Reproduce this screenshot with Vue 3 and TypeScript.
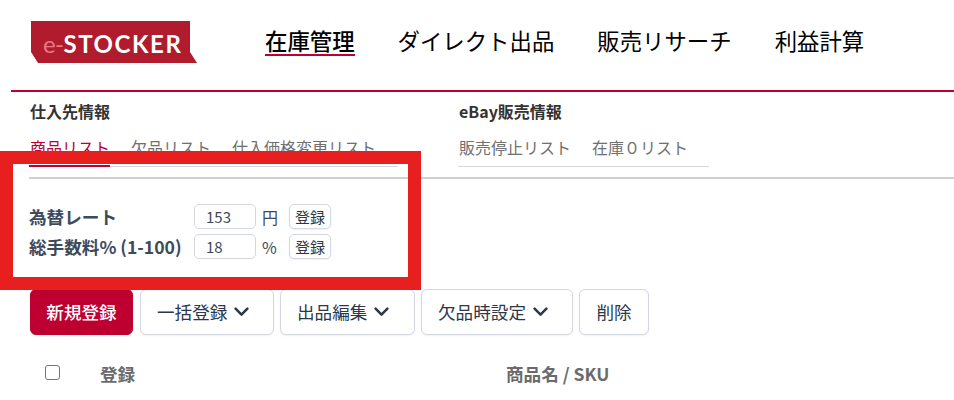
<script setup lang="ts">
const navItems = ["在庫管理", "ダイレクト出品", "販売リサーチ", "利益計算"];
const supplierTabs = ["商品リスト", "欠品リスト", "仕入価格変更リスト"];
const ebayTabs = ["販売停止リスト", "在庫０リスト"];
const actions = [
  { label: "一括登録", wide: 134 },
  { label: "出品編集", wide: 135 },
  { label: "欠品時設定", wide: 152 },
];
</script>

<template>
  <div class="page">
    <header class="header">
      <div class="logo"><span class="logo-e">e-</span>STOCKER</div>
      <nav class="nav">
        <a v-for="(item, i) in navItems" :key="item" class="nav-item" :class="{ active: i === 0 }">{{ item }}</a>
      </nav>
    </header>

    <section class="subnav">
      <div class="group supplier">
        <h2>仕入先情報</h2>
        <div class="tabs">
          <a v-for="(tab, i) in supplierTabs" :key="tab" class="tab" :class="{ active: i === 0 }">{{ tab }}</a>
        </div>
      </div>
      <div class="group ebay">
        <h2>eBay販売情報</h2>
        <div class="tabs">
          <a v-for="tab in ebayTabs" :key="tab" class="tab">{{ tab }}</a>
        </div>
      </div>
    </section>

    <section class="settings">
      <div class="row">
        <label>為替レート</label>
        <input class="field" value="153" />
        <span class="unit">円</span>
        <button class="small">登録</button>
      </div>
      <div class="row">
        <label>総手数料% (1-100)</label>
        <input class="field" value="18" />
        <span class="unit">%</span>
        <button class="small">登録</button>
      </div>
    </section>

    <section class="actions">
      <button class="btn primary">新規登録</button>
      <button v-for="a in actions" :key="a.label" class="btn menu" :style="{ width: a.wide + 'px' }">
        {{ a.label }}
        <svg class="chev" viewBox="0 0 15 10" width="15" height="10">
          <path d="M1.6 1.6 7.5 7.6l5.9-6" fill="none" stroke="#2d3748" stroke-width="2.5" stroke-linecap="round" stroke-linejoin="round" />
        </svg>
      </button>
      <button class="btn del">削除</button>
    </section>

    <section class="thead">
      <span class="check"></span>
      <span class="col-reg">登録</span>
      <span class="col-name">商品名 / SKU</span>
    </section>

    <div class="highlight"></div>
  </div>
</template>

<style>
html,
body {
  background: #fff;
  overflow: hidden;
}
</style>

<style scoped>
.page {
  position: relative;
  width: 954px;
  height: 400px;
  overflow: hidden;
  font-family: "Noto Sans CJK JP", "Noto Sans", sans-serif;
  color: #2d3748;
}
.header {
  display: flex;
  align-items: flex-start;
  height: 92px;
  margin-left: 11px;
  padding: 21px 0 0 20px;
  box-sizing: border-box;
  border-bottom: 2px solid #bd0030;
}
.logo {
  width: 166px;
  height: 42px;
  padding: 2px 0 0 12px;
  box-sizing: border-box;
  background: #b01c2e;
  clip-path: polygon(0 0, 159px 0, 159px 31px, 166px 42px, 7px 42px, 0 31px);
  color: #fff;
  font-family: Lato, sans-serif;
  font-weight: 700;
  font-size: 24px;
  line-height: 42px;
  letter-spacing: 1.6px;
  white-space: nowrap;
}
.logo-e {
  color: #ec7784;
  font-weight: 400;
  letter-spacing: -0.6px;
}
.nav {
  display: flex;
  gap: 43px;
  margin-left: 68px;
}
.nav-item {
  font-size: 22.4px;
  line-height: 30px;
  margin-top: 4px;
  color: #000;
  box-sizing: border-box;
}
.nav-item.active {
  font-weight: 500;
  height: 31px;
  border-bottom: 2px solid #bd0030;
}
.subnav {
  display: flex;
  margin-left: 29px;
  height: 87px;
  border-bottom: 2px solid #d0d0d0;
  box-sizing: border-box;
}
.group h2 {
  margin: 0 0 0 1px;
  padding-top: 8px;
  font-size: 16px;
  line-height: 22px;
  font-weight: 700;
  color: #333;
}
.supplier {
  width: 369px;
}
.ebay {
  width: 251px;
  margin-left: 60px;
}
.tabs {
  display: flex;
  gap: 20px;
  margin-top: 13px;
  border-bottom: 1px solid #d5d5de;
  height: 32px;
  box-sizing: border-box;
}
.tab {
  font-size: 16px;
  line-height: 24px;
  height: 32px;
  padding: 0 0 0 1px;
  box-sizing: border-box;
  color: #707070;
}
.tab.active {
  color: #bd0030;
  border-bottom: 2px solid #bd0030;
}
.settings {
  display: flex;
  flex-direction: column;
  gap: 5px;
  margin: 25px 0 0 29px;
}
.row {
  display: flex;
  align-items: center;
  height: 25px;
}
.row label {
  width: 165px;
  font-size: 17.6px;
  font-weight: 700;
  color: #3d4a5c;
  white-space: nowrap;
}
.field {
  width: 62px;
  height: 25px;
  box-sizing: border-box;
  padding: 0 10px 0 11px;
  border: 1px solid #d4d6e2;
  border-radius: 5px;
  font-family: inherit;
  font-size: 15px;
  color: #3d4a5c;
  outline: none;
}
.unit {
  width: 33px;
  padding-left: 6px;
  box-sizing: border-box;
  font-size: 16px;
  color: #3d4a5c;
}
.small {
  width: 42px;
  height: 25px;
  padding: 0;
  background: #fff;
  border: 1px solid #d4d6e2;
  border-radius: 5px;
  box-shadow: 0 1px 2px rgba(0, 0, 0, 0.06);
  font-family: inherit;
  font-size: 15px;
  color: #2d3748;
}
.actions {
  display: flex;
  gap: 6px;
  margin: 30px 0 0 30px;
}
.btn {
  display: inline-flex;
  align-items: center;
  justify-content: center;
  height: 46px;
  padding: 0 0 1px;
  background: #fff;
  border: 1px solid #d4d6e2;
  border-radius: 6px;
  box-shadow: 0 1px 2px rgba(0, 0, 0, 0.06);
  font-family: inherit;
  font-size: 17.6px;
  color: #2d3748;
  white-space: nowrap;
}
.btn.menu {
  justify-content: flex-start;
  gap: 7px;
  padding-left: 16px;
}
.btn.primary {
  width: 103px;
  margin-right: 1px;
  background: #bd0030;
  border-color: #bd0030;
  color: #fff;
  font-weight: 500;
}
.btn.del {
  width: 70px;
}
.thead {
  display: flex;
  align-items: center;
  height: 24px;
  margin: 26px 0 0 45px;
  font-size: 17.6px;
  font-weight: 700;
  color: #6b6b6b;
}
.check {
  width: 15px;
  height: 15px;
  box-sizing: border-box;
  border: 1px solid #767676;
  border-radius: 3px;
  margin-top: -1px;
}
.col-reg {
  margin-left: 40px;
  width: 406px;
}
.highlight {
  position: absolute;
  left: 0;
  top: 151px;
  width: 421px;
  height: 139px;
  box-sizing: border-box;
  border: 13px solid #e71f1f;
}
</style>
